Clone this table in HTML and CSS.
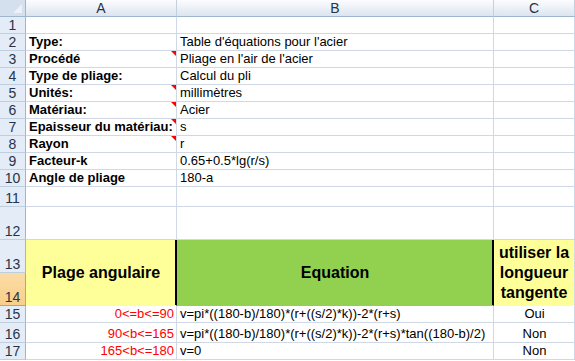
FILE: index.html
```html
<!DOCTYPE html>
<html lang="fr">
<head>
  <meta charset="UTF-8" />
  <meta name="viewport" content="width=device-width, initial-scale=1.0"/>
  <title>Table d'équations pour l'acier</title>
  <link rel="stylesheet" href="styles.css">
</head>
<body>
  <div class="sheet">
    <div class="corner"></div>
    <div class="colhead">A</div>
    <div class="colhead">B</div>
    <div class="colhead">C</div>

    <div class="rowhead">1</div>
    <div class="cell"></div><div class="cell"></div><div class="cell"></div>

    <div class="rowhead">2</div>
    <div class="cell label">Type:</div>
    <div class="cell">Table d'équations pour l'acier</div>
    <div class="cell"></div>

    <div class="rowhead">3</div>
    <div class="cell label note">Procédé</div>
    <div class="cell">Pliage en l'air de l'acier</div>
    <div class="cell"></div>

    <div class="rowhead">4</div>
    <div class="cell label">Type de pliage:</div>
    <div class="cell">Calcul du pli</div>
    <div class="cell"></div>

    <div class="rowhead">5</div>
    <div class="cell label note">Unités:</div>
    <div class="cell">millimètres</div>
    <div class="cell"></div>

    <div class="rowhead">6</div>
    <div class="cell label note">Matériau:</div>
    <div class="cell">Acier</div>
    <div class="cell"></div>

    <div class="rowhead">7</div>
    <div class="cell label note">Epaisseur du matériau:</div>
    <div class="cell">s</div>
    <div class="cell"></div>

    <div class="rowhead">8</div>
    <div class="cell label note">Rayon</div>
    <div class="cell">r</div>
    <div class="cell"></div>

    <div class="rowhead">9</div>
    <div class="cell label">Facteur-k</div>
    <div class="cell">0.65+0.5*lg(r/s)</div>
    <div class="cell"></div>

    <div class="rowhead">10</div>
    <div class="cell label">Angle de pliage</div>
    <div class="cell">180-a</div>
    <div class="cell"></div>

    <div class="rowhead">11</div>
    <div class="cell"></div><div class="cell"></div><div class="cell"></div>

    <div class="rowhead">12</div>
    <div class="cell"></div><div class="cell"></div><div class="cell"></div>

    <!-- en-tête fusionné sur les lignes 13 et 14 -->
    <div class="rowhead">13</div>
    <div class="cell head head-a">Plage angulaire</div>
    <div class="cell head head-b">Equation</div>
    <div class="cell head head-c">utiliser la longueur tangente</div>
    <div class="rowhead active">14</div>

    <div class="rowhead">15</div>
    <div class="cell range">0&lt;=b&lt;=90</div>
    <div class="cell">v=pi*((180-b)/180)*(r+((s/2)*k))-2*(r+s)</div>
    <div class="cell center">Oui</div>

    <div class="rowhead">16</div>
    <div class="cell range">90&lt;b&lt;=165</div>
    <div class="cell">v=pi*((180-b)/180)*(r+((s/2)*k))-2*(r+s)*tan((180-b)/2)</div>
    <div class="cell center">Non</div>

    <div class="rowhead">17</div>
    <div class="cell range">165&lt;b&lt;=180</div>
    <div class="cell">v=0</div>
    <div class="cell center">Non</div>
  </div>
</body>
</html>
```

FILE: styles.css
```css
body {
  margin: 0;
  background-color: #fff;
  font-family: "Liberation Sans", Arial, sans-serif;
  overflow: hidden;
}
.sheet {
  display: grid;
  grid-template-columns: 26px 151px 317px 1fr;
  grid-template-rows: repeat(11, 17px) 20px 33px 33px 33px 17px 20px 17px;
}
.sheet > div {
  box-sizing: border-box;
  display: flex;
  align-items: flex-end;
  white-space: nowrap;
}
/* Cellules de la feuille */
.cell {
  position: relative;
  padding: 0 2px 0 3px;
  font-size: 13px;
  line-height: 16px;
  color: #000;
  border-right: 1px solid #d0d7e5;
  border-bottom: 1px solid #d0d7e5;
}
.label {
  font-weight: bold;
}
.range {
  justify-content: flex-end;
  color: #ff0000;
}
.center {
  justify-content: center;
}
/* petit triangle rouge = commentaire */
.note::after {
  content: "";
  position: absolute;
  top: 0;
  right: 0;
  border-top: 5px solid #ff0000;
  border-left: 5px solid transparent;
}
/* En-têtes de lignes et de colonnes */
.corner {
  position: relative;
  background-color: #d5e0ee;
  border-right: 1px solid #9eb6ce;
  border-bottom: 1px solid #9eb6ce;
}
.corner::after {
  content: "";
  position: absolute;
  right: 3px;
  bottom: 3px;
  border-bottom: 9px solid #eef2f8;
  border-left: 9px solid transparent;
}
.colhead {
  justify-content: center;
  align-items: center !important;
  font-size: 14px;
  color: #27334a;
  background: linear-gradient(to bottom, #fbfcfe 0%, #eef2f8 45%, #dbe4ef 100%);
  border-right: 1px solid #c3d0df;
  border-bottom: 1px solid #9eb6ce;
}
.rowhead {
  justify-content: center;
  font-size: 14px;
  line-height: 16px;
  color: #27334a;
  background-color: #e4ecf7;
  border-right: 1px solid #9eb6ce;
  border-bottom: 1px solid #c0cfe0;
}
.rowhead.active {
  background: linear-gradient(to bottom, #fbdca6, #f8cf88);
  border-right-color: #f29536;
  border-bottom-color: #f29536;
}
/* Bloc d'en-tête du tableau des équations */
.head {
  grid-row: span 2;
  justify-content: center;
  align-items: center !important;
  text-align: center;
  white-space: normal !important;
  padding: 0 2px;
  font-size: 16px;
  line-height: 20px;
  font-weight: bold;
}
.head-a {
  background-color: #ffff99;
  border-bottom-color: #ffff99;
  border-right-color: #000;
  box-shadow: inset -1px 0 #000;
}
.head-b {
  background-color: #92d050;
  border-bottom-color: #92d050;
  border-right-color: #000;
  box-shadow: inset -1px 0 #000;
}
.head-c {
  background-color: #ffff99;
  border-bottom-color: #ffff99;
}
```
